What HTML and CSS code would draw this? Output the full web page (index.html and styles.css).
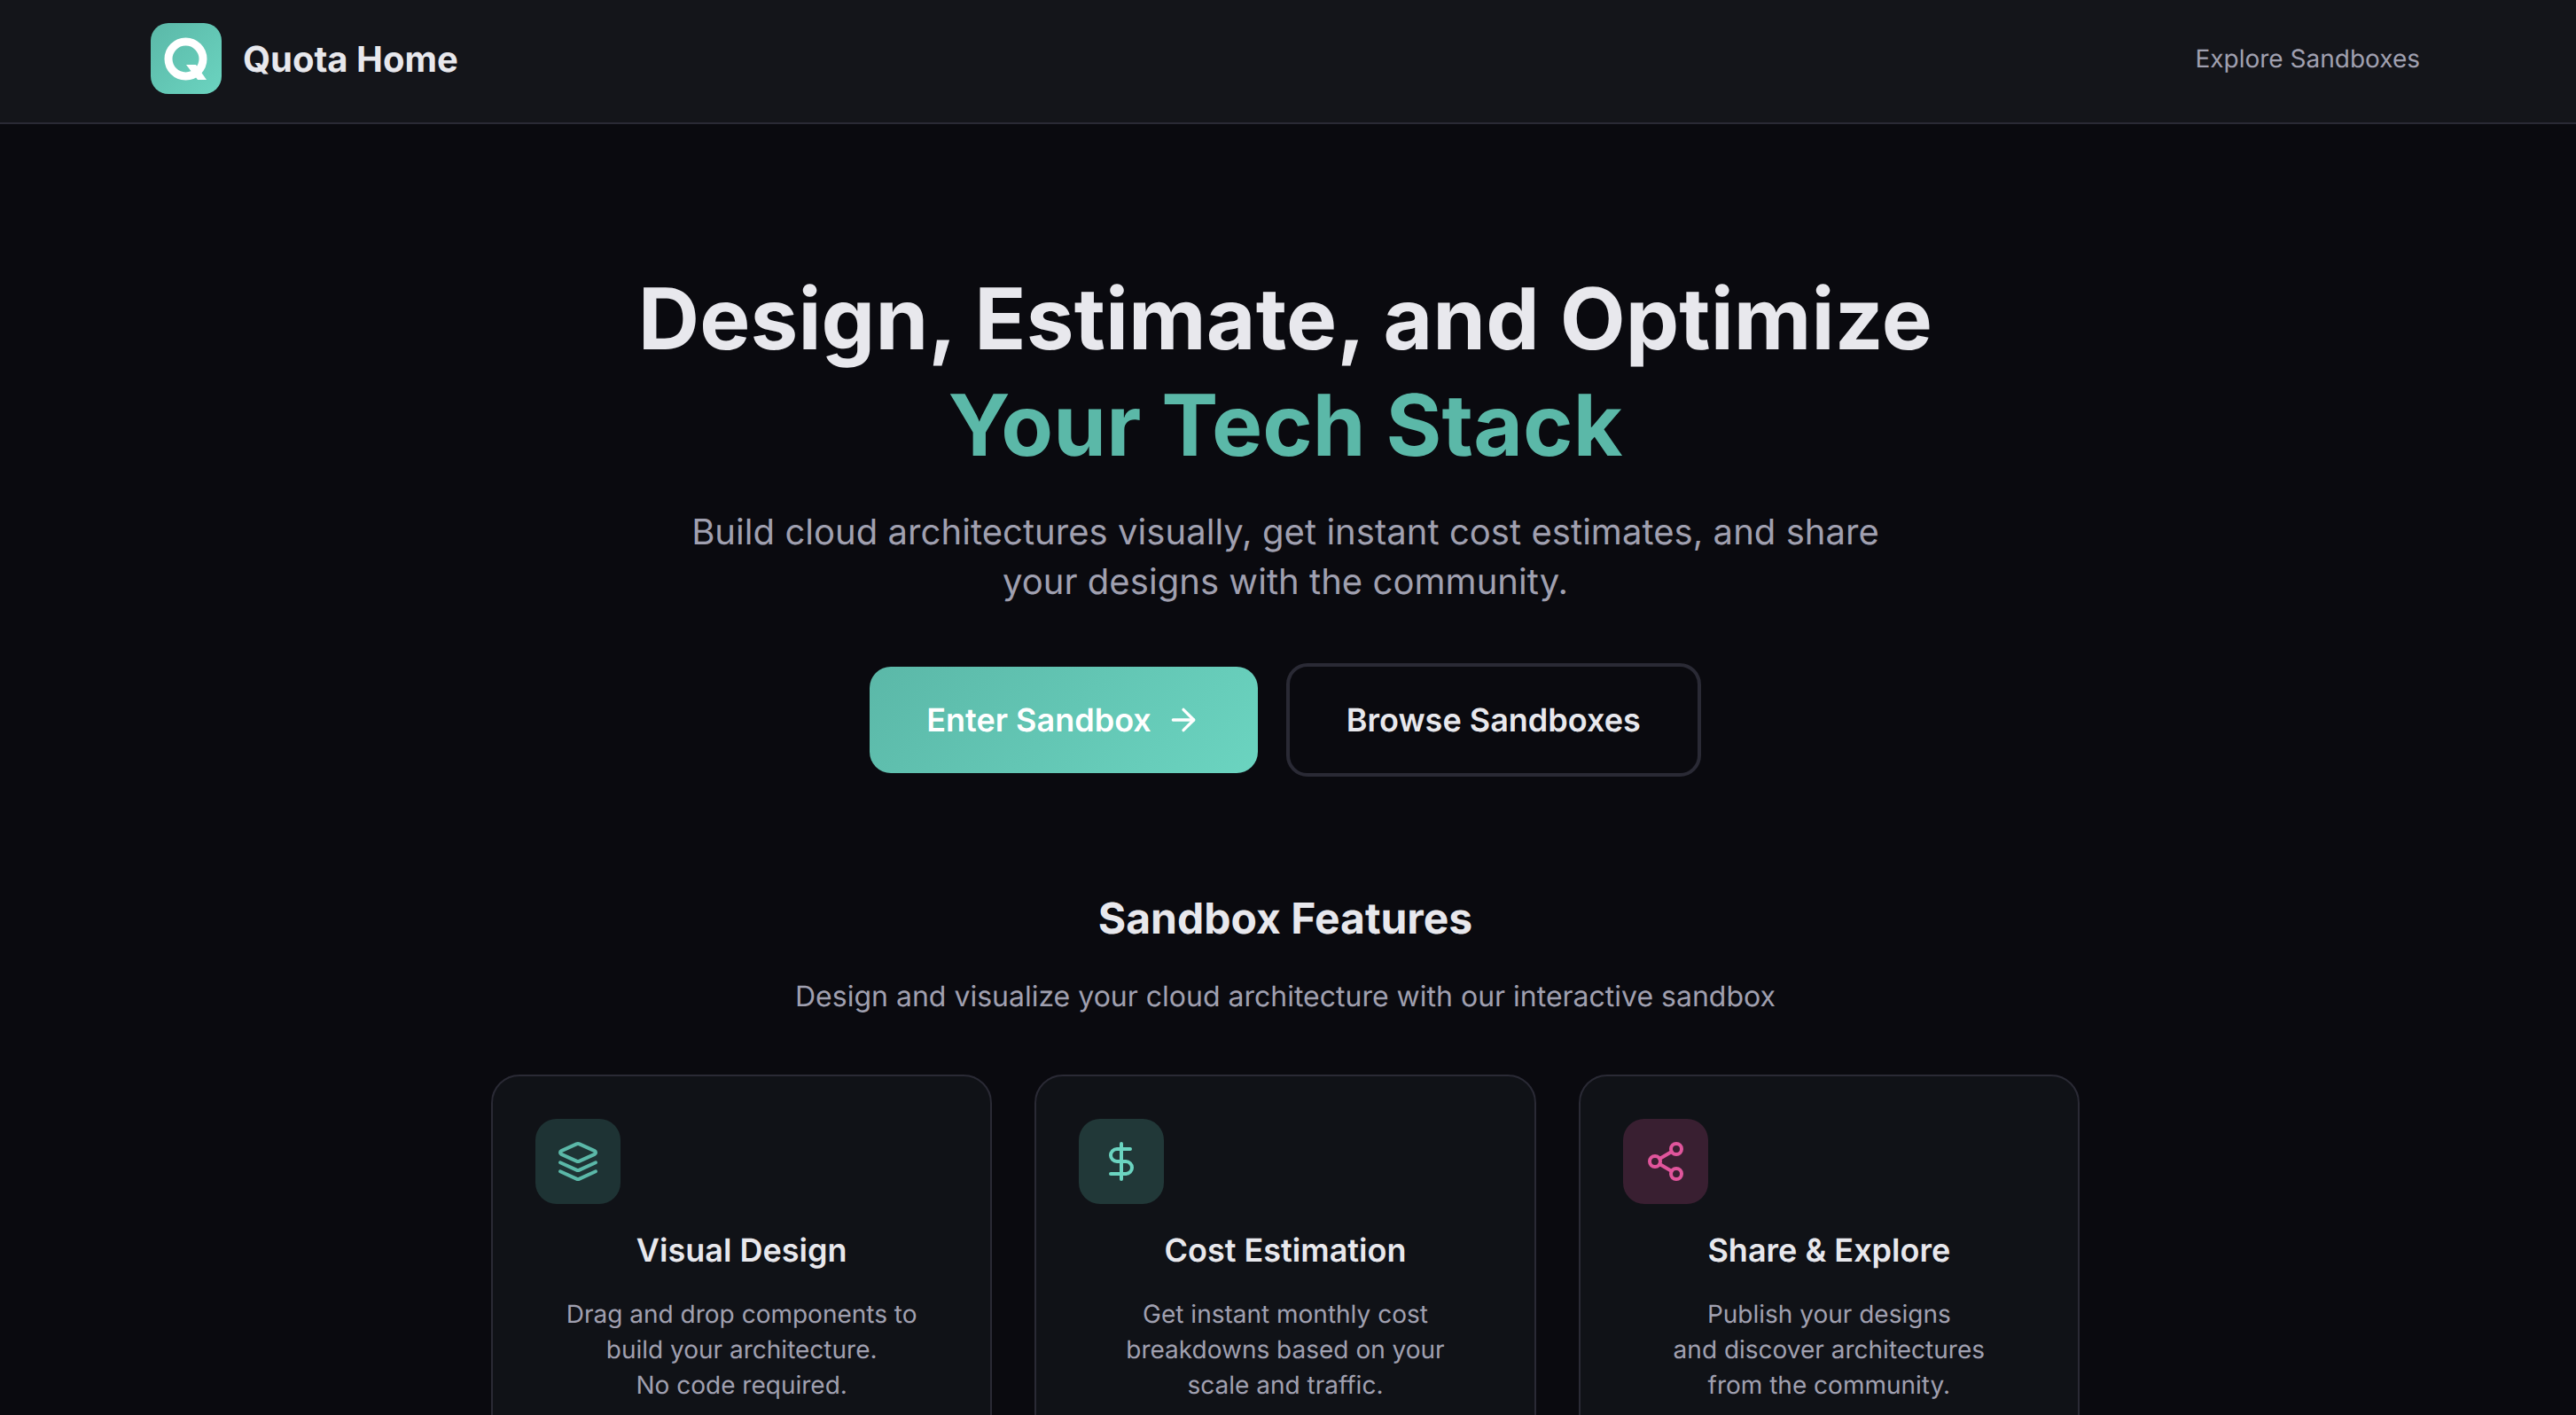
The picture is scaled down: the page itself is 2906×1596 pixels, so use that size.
FILE: index.html
```html
<!DOCTYPE html>
<html lang="en">
<head>
    <meta charset="UTF-8">
    <meta name="viewport" content="width=device-width, initial-scale=1.0">
    <title>Quota Home</title>
    <link rel="stylesheet" href="styles.css">
</head>
<body>

    <header class="header">
        <div class="brand">
            <div class="brand-logo">
                <svg viewBox="0 0 80 80" width="80" height="80" fill="none">
                    <circle cx="39.5" cy="40.5" r="19.5" stroke="#fff" stroke-width="9"/>
                    <path d="M40 47h11l12 17H53z" fill="#fff"/>
                </svg>
            </div>
            <span class="brand-name">Quota Home</span>
        </div>
        <a class="nav-link">Explore Sandboxes</a>
    </header>

    <section class="hero">
        <h1>Design, Estimate, and Optimize<br><span class="accent">Your Tech Stack</span></h1>
        <p class="hero-text">Build cloud architectures visually, get instant cost estimates, and share<br>your designs with the community.</p>
        <div class="hero-actions">
            <a class="btn btn-primary">
                Enter Sandbox
                <svg viewBox="0 0 24 24" width="40" height="40" fill="none" stroke="currentColor" stroke-width="2" stroke-linecap="round" stroke-linejoin="round">
                    <path d="M5 12h14"/>
                    <path d="m12 5 7 7-7 7"/>
                </svg>
            </a>
            <a class="btn btn-secondary">Browse Sandboxes</a>
        </div>
    </section>

    <section class="features">
        <h2>Sandbox Features</h2>
        <p class="features-text">Design and visualize your cloud architecture with our interactive sandbox</p>
        <div class="feature-grid">
            <div class="feature-card">
                <div class="feature-icon icon-teal">
                    <svg viewBox="0 0 24 24" width="48" height="48" fill="none" stroke="currentColor" stroke-width="2" stroke-linecap="round" stroke-linejoin="round">
                        <path d="m12.83 2.18a2 2 0 0 0-1.66 0L2.6 6.08a1 1 0 0 0 0 1.83l8.58 3.91a2 2 0 0 0 1.66 0l8.58-3.9a1 1 0 0 0 0-1.83Z"/>
                        <path d="m22 12.65-9.17 4.16a2 2 0 0 1-1.66 0L2 12.65"/>
                        <path d="m22 17.65-9.17 4.16a2 2 0 0 1-1.66 0L2 17.65"/>
                    </svg>
                </div>
                <h3>Visual Design</h3>
                <p>Drag and drop components to<br>build your architecture.<br>No code required.</p>
            </div>
            <div class="feature-card">
                <div class="feature-icon icon-mint">
                    <svg viewBox="0 0 24 24" width="48" height="48" fill="none" stroke="currentColor" stroke-width="2" stroke-linecap="round" stroke-linejoin="round">
                        <line x1="12" y1="2" x2="12" y2="22"/>
                        <path d="M17 5H9.5a3.5 3.5 0 0 0 0 7h5a3.5 3.5 0 0 1 0 7H6"/>
                    </svg>
                </div>
                <h3>Cost Estimation</h3>
                <p>Get instant monthly cost<br>breakdowns based on your<br>scale and traffic.</p>
            </div>
            <div class="feature-card">
                <div class="feature-icon icon-pink">
                    <svg viewBox="0 0 24 24" width="48" height="48" fill="none" stroke="currentColor" stroke-width="2" stroke-linecap="round" stroke-linejoin="round">
                        <circle cx="18" cy="5" r="3"/>
                        <circle cx="6" cy="12" r="3"/>
                        <circle cx="18" cy="19" r="3"/>
                        <line x1="8.59" y1="13.51" x2="15.42" y2="17.49"/>
                        <line x1="15.41" y1="6.51" x2="8.59" y2="10.49"/>
                    </svg>
                </div>
                <h3>Share &amp; Explore</h3>
                <p>Publish your designs<br>and discover architectures<br>from the community.</p>
            </div>
        </div>
    </section>

</body>
</html>
```

FILE: styles.css
```css
body {
    margin: 0;
    height: 1596px;
    overflow: hidden;
    background-color: #0a0a0f;
    color: #e8e8ed;
    font-family: Inter, "Liberation Sans", sans-serif;
    text-rendering: geometricPrecision;
}
.header {
    display: flex;
    align-items: center;
    justify-content: space-between;
    box-sizing: border-box;
    height: 140px;
    padding: 26px 176px 32px 170px;
    background-color: #14151a;
    border-bottom: 2px solid #2a2a35;
}
.brand {
    display: flex;
    align-items: center;
    gap: 24px;
}
.brand-logo {
    width: 80px;
    height: 80px;
    border-radius: 20px;
    background: linear-gradient(135deg, #5bb8a8, #6bd4c0);
}
.brand-logo svg {
    display: block;
}
.brand-name {
    font-size: 40px;
    font-weight: 700;
}
.nav-link {
    font-size: 28px;
    color: #a0a0b0;
}
.hero {
    padding: 0 6px 0 0;
    text-align: center;
}
.hero h1 {
    margin: 160px 0 0;
    font-size: 96px;
    line-height: 120px;
    font-weight: 700;
    letter-spacing: 0.12px;
}
.accent {
    color: #5bb8a8;
}
.hero-text {
    margin: 32px 0 0;
    font-size: 40px;
    line-height: 56px;
    color: #a0a0b0;
    letter-spacing: 0.05px;
}
.hero-actions {
    display: flex;
    align-items: center;
    justify-content: center;
    gap: 32px;
    margin-top: 64px;
}
.btn {
    display: flex;
    align-items: center;
    justify-content: center;
    box-sizing: border-box;
    font-size: 36px;
    font-weight: 600;
    border-radius: 24px;
}
.btn-primary {
    gap: 16px;
    height: 120px;
    padding: 0 64px;
    color: #fff;
    background: linear-gradient(135deg, #5bb8a8, #6bd4c0);
}
.btn-secondary {
    height: 128px;
    padding: 0 64px;
    color: #e8e8ed;
    border: 4px solid #2a2a35;
}
.features {
    padding: 0 6px 0 0;
    text-align: center;
}
.features h2 {
    margin: 130px 0 0;
    font-size: 48px;
    line-height: 60px;
    font-weight: 700;
}
.features-text {
    margin: 36px 0 0;
    font-size: 32px;
    line-height: 44px;
    color: #a0a0b0;
}
.feature-grid {
    display: grid;
    grid-template-columns: repeat(3, 1fr);
    gap: 48px;
    width: 1792px;
    margin: 66px auto 0;
}
.feature-card {
    padding: 48px;
    background-color: #101217;
    border: 2px solid #2a2a35;
    border-radius: 32px;
}
.feature-icon {
    display: flex;
    align-items: center;
    justify-content: center;
    width: 96px;
    height: 96px;
    border-radius: 24px;
}
.icon-teal {
    color: #5bb8a8;
    background-color: rgba(91, 184, 168, 0.2);
}
.icon-mint {
    color: #6bd4c0;
    background-color: rgba(107, 212, 192, 0.2);
}
.icon-pink {
    color: #e0559c;
    background-color: rgba(224, 85, 156, 0.2);
}
.feature-card h3 {
    margin: 24px 0 0;
    font-size: 36px;
    line-height: 56px;
    font-weight: 600;
}
.feature-card p {
    margin: 24px 0 0;
    font-size: 28px;
    line-height: 40px;
    color: #a0a0b0;
}
```
